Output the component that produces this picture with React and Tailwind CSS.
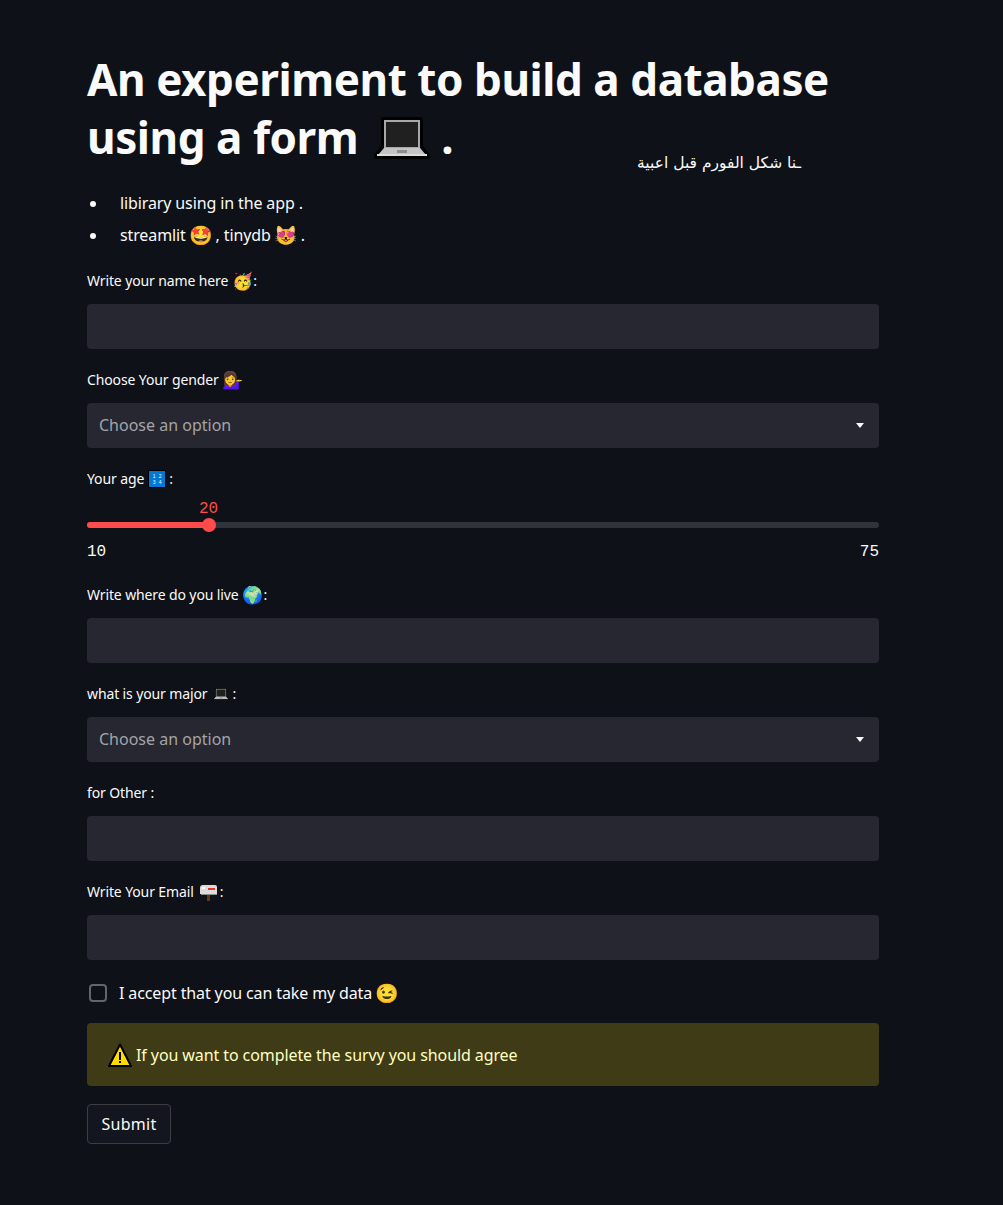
import React from 'react';

const FONT = "font-['Noto_Sans','Liberation_Sans',sans-serif]";

function LaptopIcon({ className }) {
    return (
        <svg className={className} viewBox="0 0 56 42" role="img" aria-label="laptop">
            <path d="M10 0h36a3 3 0 0 1 3 3v26l7 9v2a2 2 0 0 1-2 2H2a2 2 0 0 1-2-2v-2l7-9V3a3 3 0 0 1 3-3z" fill="#000" />
            <rect x="10" y="3" width="36" height="28" fill="#a8a8a8" />
            <rect x="12" y="5" width="32" height="25" fill="#202020" />
            <path d="M10 31h36l6 7H4z" fill="#c4c4c4" />
            <rect x="3" y="37" width="50" height="2" fill="#dcdcdc" />
            <rect x="23" y="33" width="10" height="3" fill="#8e8e8e" />
        </svg>
    );
}

function NumbersIcon() {
    return (
        <svg className="inline-block w-[18px] h-[18px] align-[-4px]" viewBox="0 0 18 18" role="img" aria-label="numbers">
            <rect width="18" height="18" rx="1" fill="#000" />
            <rect x="1" y="1" width="16" height="16" fill="#0078d4" />
            <g fill="#fff" fontSize="5" fontFamily="Liberation Sans" textAnchor="middle">
                <text x="6" y="8">1</text>
                <text x="12" y="8">2</text>
                <text x="6" y="14">3</text>
                <text x="12" y="14">4</text>
            </g>
        </svg>
    );
}

function MailboxIcon() {
    return (
        <svg className="inline-block w-[17px] h-[16px] ml-[3px] -mr-[1px] align-[-4px]" viewBox="0 0 17 16" role="img" aria-label="mailbox">
            <rect x="7" y="8" width="3" height="8" fill="#5c3a1e" />
            <path d="M3 0h12a2 2 0 0 1 2 2v7H0V3a3 3 0 0 1 3-3z" fill="#dcdcdc" />
            <rect x="1" y="9" width="16" height="1" fill="#8c8c8c" />
            <rect x="2" y="2" width="3" height="2" fill="#fafafa" />
            <rect x="8" y="3" width="7" height="2" fill="#e5342b" />
        </svg>
    );
}

function WarningIcon() {
    return (
        <svg className="shrink-0 w-6 h-6 mr-1" viewBox="0 0 24 24" role="img" aria-label="warning">
            <path d="M12 1.5 23 23H1z" fill="#ffdc00" stroke="#000" strokeWidth="2" strokeLinejoin="round" />
            <rect x="11" y="9" width="2" height="8" fill="#000" />
            <rect x="11" y="18" width="2" height="2" fill="#000" />
        </svg>
    );
}

// label emoji sit a little bigger than the text around them
function SmallEmoji({ children }) {
    return <span className="text-[17px] leading-none -mr-[3px] align-[-1px]">{children}</span>;
}

function BigEmoji({ children }) {
    return <span className="text-[19px] leading-none -mx-[1px] align-[-1px]">{children}</span>;
}

function Label({ children }) {
    return <div className="h-5 mb-[13px] text-sm leading-5 text-[#fafafa] tracking-[-0.12px]">{children}</div>;
}

function TextField({ label }) {
    return (
        <div className="mb-[21px]">
            <Label>{label}</Label>
            <div className="h-[45px] bg-[#262730] rounded"></div>
        </div>
    );
}

function SelectField({ label }) {
    return (
        <div className="mb-[21px]">
            <Label>{label}</Label>
            <div className="h-[45px] bg-[#262730] rounded flex items-center justify-between pl-3 pr-[15px]">
                <span className="text-base text-[#a3a4a8] pb-[2px]">Choose an option</span>
                <svg width="8" height="5" viewBox="0 0 8 5"><path d="M0 0h8L4 5z" fill="#fafafa" /></svg>
            </div>
        </div>
    );
}

function App() {
    return (
        <div className={`${FONT} relative min-h-[1205px] bg-[#0e1117] text-[#fafafa] pt-[50px] pl-[87px] pr-[124px]`}>
            {/* Title */}
            <h1 className="text-[44px] leading-[58px] font-bold tracking-[-0.44px] m-0">
                An experiment to build a database using a form{' '}
                <LaptopIcon className="inline-block w-14 h-[42px] ml-[5px] align-[-5px]" /> .
            </h1>

            {/* Floating note */}
            <div dir="rtl" className="absolute left-[639px] top-[151px] w-[162px] text-[15.5px] leading-6 whitespace-nowrap font-['DejaVu_Sans',sans-serif] text-[#fafafa]">
                ـنا شكل الفورم قبل اعبية
            </div>

            <ul className="mt-[21px] mb-[20px] list-disc pl-[21px] text-base tracking-[-0.12px]">
                <li className="h-8 leading-8 pl-3">libirary using in the app .</li>
                <li className="h-8 leading-8 pl-3">streamlit <BigEmoji>🤩</BigEmoji> , tinydb <BigEmoji>😻</BigEmoji> .</li>
            </ul>

            <TextField label={<>Write your name here <SmallEmoji>🥳</SmallEmoji> :</>} />
            <SelectField label={<>Choose Your gender <SmallEmoji>💁‍♀️</SmallEmoji></>} />

            {/* Age slider */}
            <div className="mb-[23px]">
                <div className="h-5 text-sm leading-5 tracking-[-0.12px]">Your age <NumbersIcon /> :</div>
                <div className="relative mt-[14px] h-[6px] top-[19px] bg-[#31333b] rounded-full">
                    <div className="h-full w-[122px] bg-[#ff4b4b] rounded-full"></div>
                    <div className="absolute left-[115px] top-[-4px] w-[14px] h-[14px] rounded-full bg-[#ff4b4b]"></div>
                    <div className="absolute left-[112px] top-[-23px] font-['Liberation_Mono',monospace] text-base leading-5 text-[#ff4b4b]">20</div>
                </div>
                <div className="mt-[33px] flex justify-between font-['Liberation_Mono',monospace] text-base leading-5">
                    <span>10</span>
                    <span>75</span>
                </div>
            </div>

            <TextField label={<>Write where do you live <SmallEmoji>🌍</SmallEmoji> :</>} />
            <SelectField
                label={
                    <>
                        what is your major <LaptopIcon className="inline-block w-4 h-3 ml-[2px] align-[-1px]" /> :
                    </>
                }
            />
            <TextField label="for Other :" />
            <TextField label={<>Write Your Email <MailboxIcon /> :</>} />

            {/* Consent */}
            <div className="flex items-center h-[18px] pl-[2px] mt-6">
                <div className="w-[18px] h-[18px] rounded border-2 border-[#62656c]"></div>
                <span className="ml-3 text-base tracking-[-0.12px] whitespace-nowrap">I accept that you can take my data <BigEmoji>😉</BigEmoji></span>
            </div>

            <div className="mt-[21px] h-[63px] bg-[#3e3b16] rounded flex items-center pl-[21px] text-base text-[#ffffc2] tracking-[-0.09px]">
                <WarningIcon />
                If you want to complete the survy you should agree
            </div>

            <button className="mt-[18px] h-10 w-[84px] rounded border border-[#3c3e44] bg-[#13161e] text-base text-[#fafafa] tracking-[0.3px]">
                Submit
            </button>
        </div>
    );
}

export default App;
